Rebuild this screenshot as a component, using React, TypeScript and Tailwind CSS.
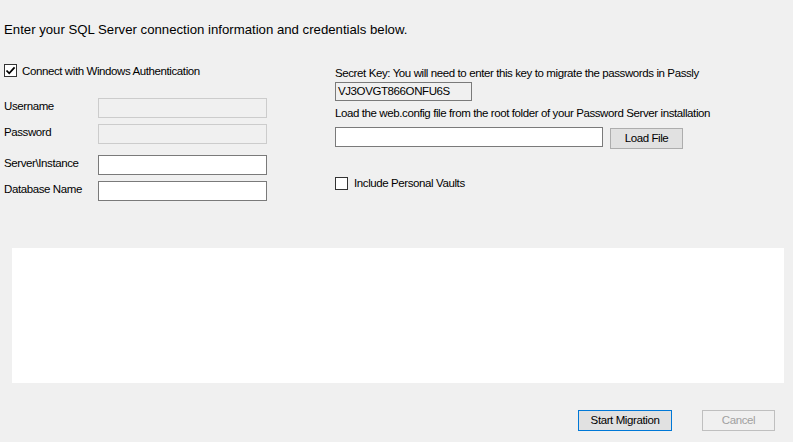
import React from "react";

const font = { fontFamily: '"Liberation Sans", Arial, sans-serif' };

function Check({ checked }: { checked?: boolean }) {
  return (
    <div className="w-[13px] h-[13px] border border-[#333333] bg-white flex items-center justify-center shrink-0">
      {checked && (
        <svg width="11" height="11" viewBox="0 0 11 11">
          <path d="M1.5 5.5 L4.2 8.3 L9.6 2.4" fill="none" stroke="#000" strokeWidth="1.8" />
        </svg>
      )}
    </div>
  );
}

function Field({ label, disabled, mt }: { label: string; disabled?: boolean; mt: string }) {
  return (
    <div className={`flex items-start ${mt}`}>
      <div className="w-[94px] leading-[14px] pt-[1px] text-black">{label}</div>
      <div
        className={`w-[169px] h-[20px] border ${
          disabled ? "border-[#cccccc] bg-[#f0f0f0]" : "border-[#7a7a7a] bg-white"
        }`}
      />
    </div>
  );
}

export default function App() {
  return (
    <div
      className="w-[793px] h-[442px] bg-[#f0f0f0] text-black overflow-hidden flex flex-col"
      style={font}
    >
      <div className="pl-[4px] pt-[21px] text-[13.2px] leading-[18px]">
        Enter your SQL Server connection information and credentials below.
      </div>
      <div className="flex pl-[4px] mt-[25px] text-[11.5px] tracking-[-0.4px]">
        <div className="w-[331px] flex flex-col">
          <div className="flex items-center h-[13px] gap-[5px] leading-[14px]">
            <Check checked />
            <span>Connect with Windows Authentication</span>
          </div>
          <Field label="Username" disabled mt="mt-[21px]" />
          <Field label="Password" disabled mt="mt-[6px]" />
          <Field label="Server\Instance" mt="mt-[11px]" />
          <Field label="Database Name" mt="mt-[6px]" />
        </div>
        <div className="flex flex-col pt-[2px] leading-[14px]">
          <div>Secret Key: You will need to enter this key to migrate the passwords in Passly</div>
          <div className="mt-[2px] w-[137px] h-[19px] border border-[#7a7a7a] bg-[#f0f0f0] pl-[2px] leading-[17px]">
            VJ3OVGT866ONFU6S
          </div>
          <div className="mt-[5px]">
            Load the web.config file from the root folder of your Password Server installation
          </div>
          <div className="flex items-start mt-[7px]">
            <div className="w-[268px] h-[20px] border border-[#7a7a7a] bg-white" />
            <button className="ml-[7px] mt-[1px] w-[73px] h-[21px] border border-[#adadad] bg-[#e1e1e1] leading-[19px] text-center">
              Load File
            </button>
          </div>
          <div className="flex items-center mt-[27px] gap-[6px]">
            <Check />
            <span>Include Personal Vaults</span>
          </div>
        </div>
      </div>
      <div className="ml-[12px] mt-[47px] w-[772px] h-[135px] bg-white" />
      <div className="flex justify-end pr-[18px] mt-[27px] gap-[30px] text-[11.5px] tracking-[-0.4px]">
        <button className="w-[94px] h-[21px] border border-[#0078d7] bg-[#e1e1e1] leading-[19px] text-center">
          Start Migration
        </button>
        <button className="w-[73px] h-[21px] border border-[#bfbfbf] bg-[#f0f0f0] text-[#a0a0a0] leading-[19px] text-center">
          Cancel
        </button>
      </div>
    </div>
  );
}
